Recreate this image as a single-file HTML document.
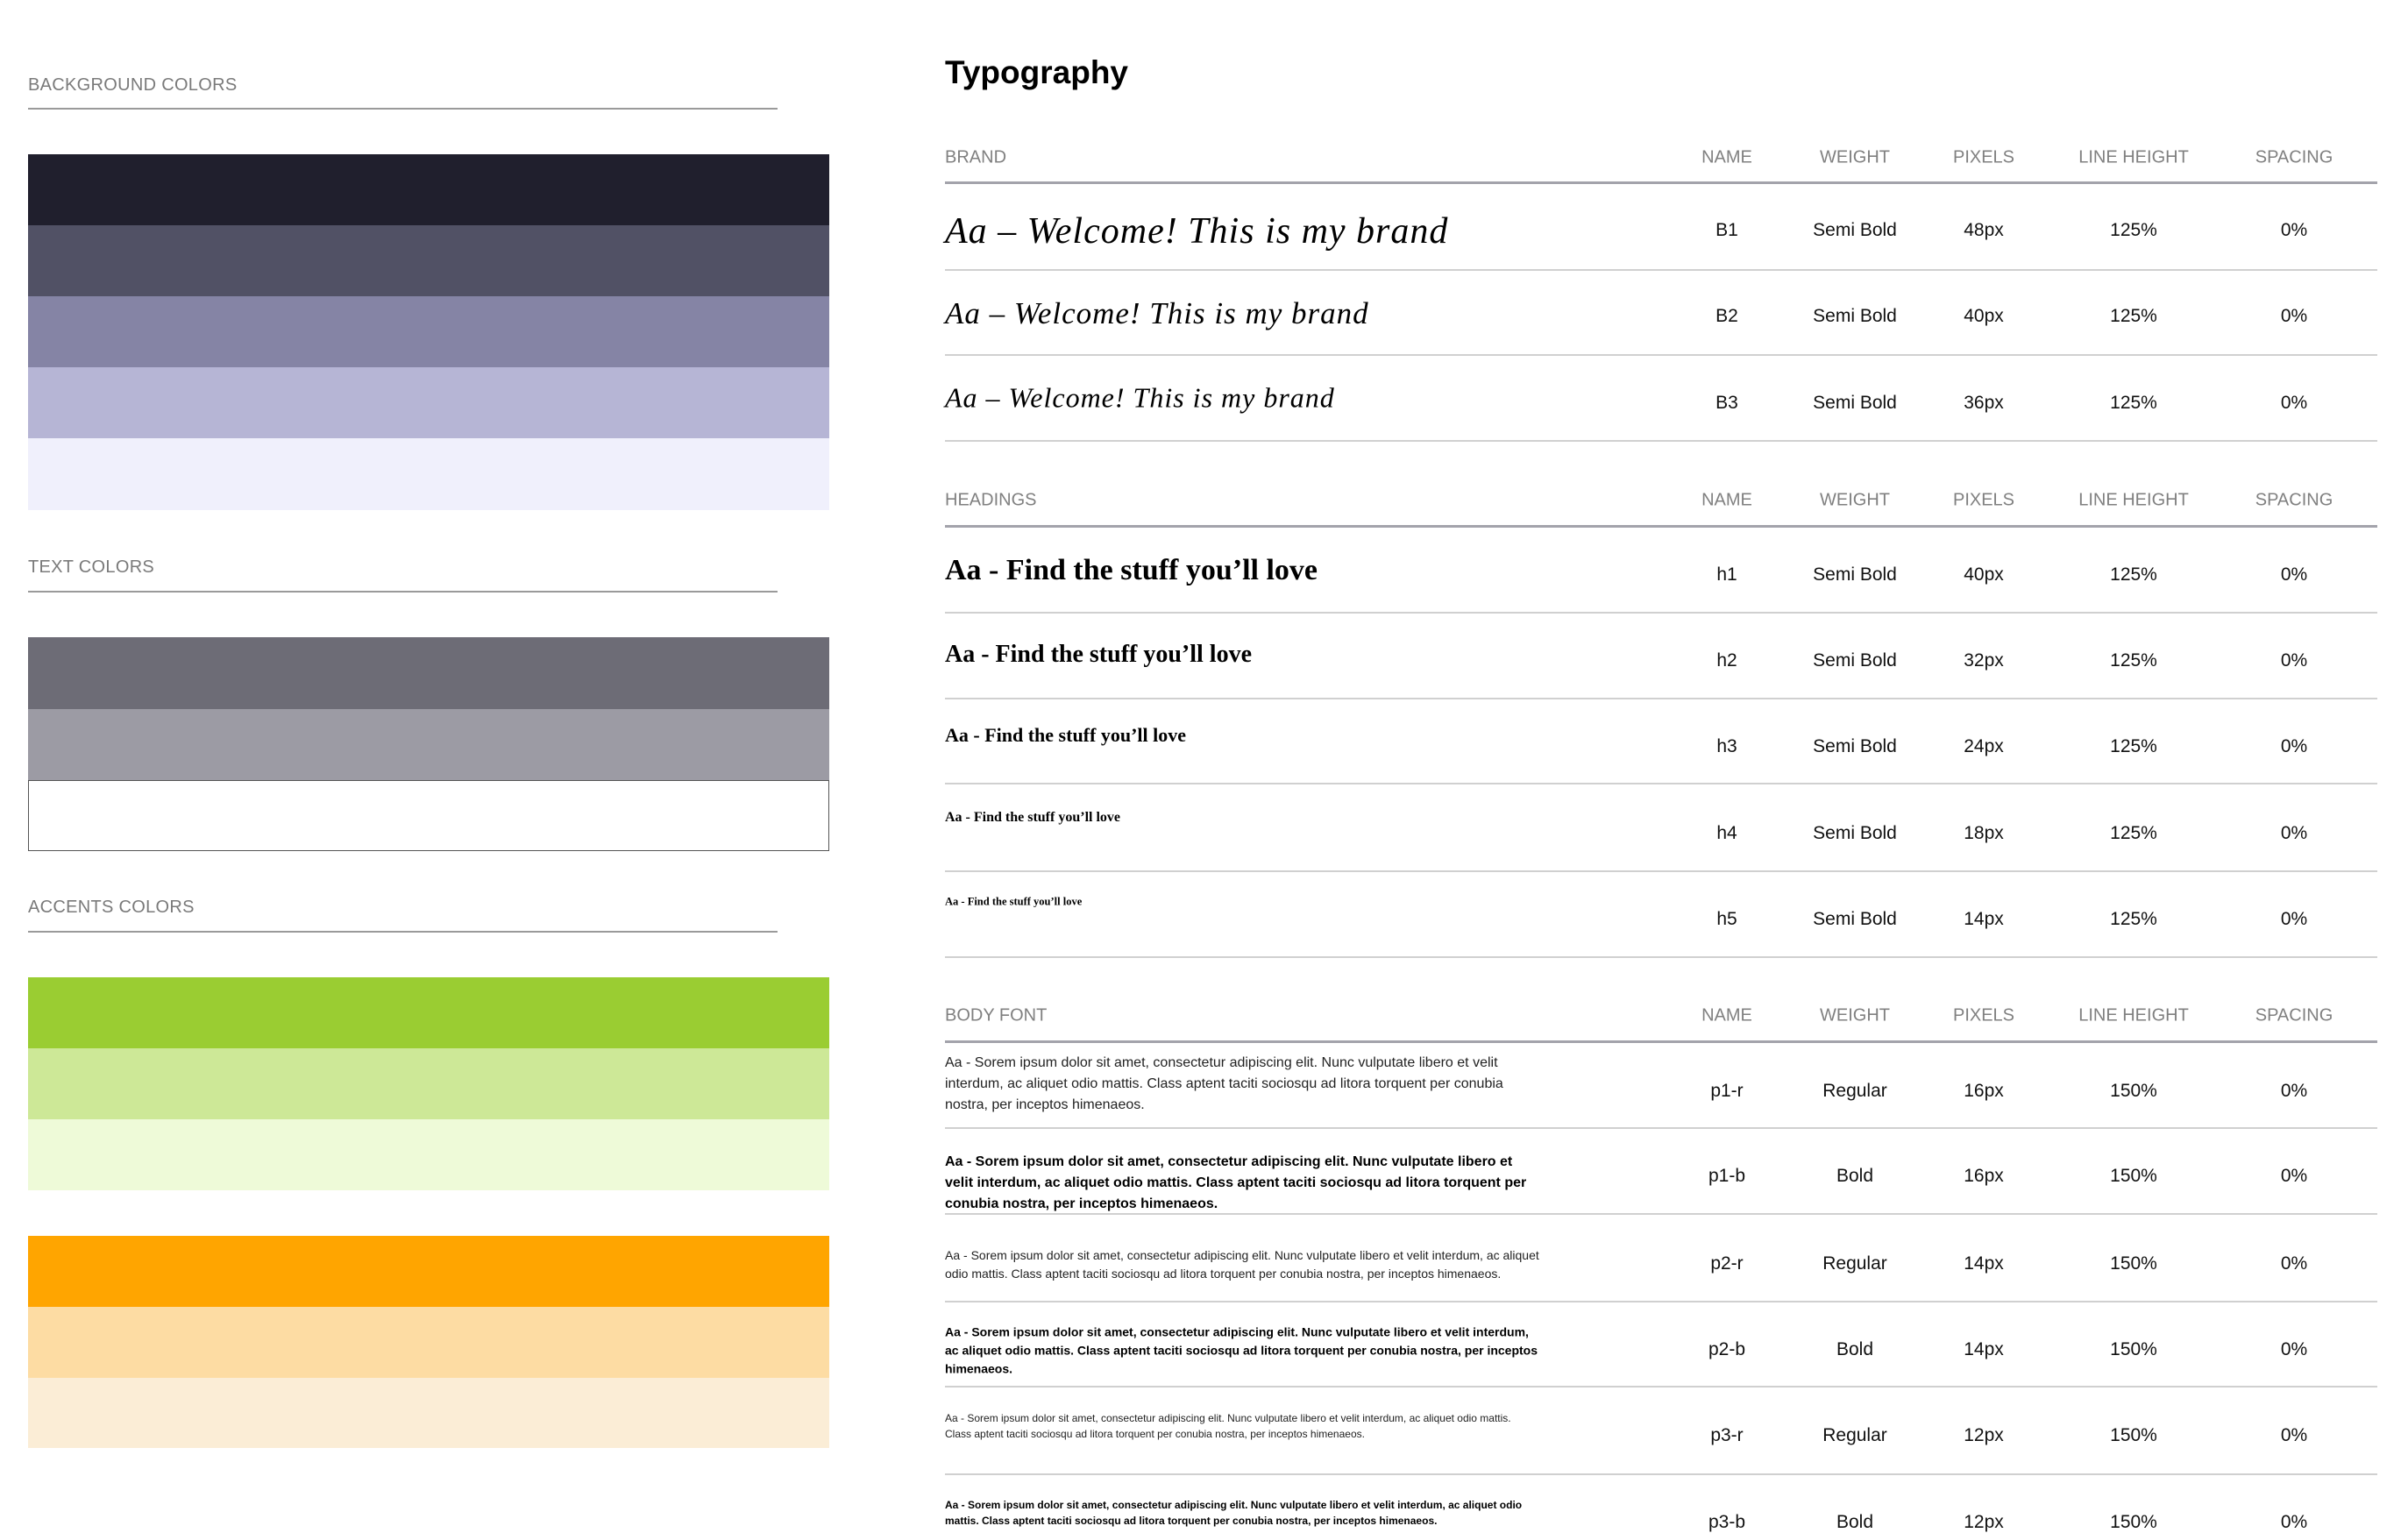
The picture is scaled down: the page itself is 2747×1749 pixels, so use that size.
<!DOCTYPE html>
<html><head><meta charset="utf-8"><style>
*{margin:0;padding:0;box-sizing:border-box}
body{width:2747px;height:1711px;background:#fff;position:relative;overflow:hidden;font-family:"Liberation Sans",sans-serif;color:#000}
.a{position:absolute}
.lbl{position:absolute;left:32px;font-size:20px;color:#7a7a7a;letter-spacing:0.3px}
.ln{position:absolute;left:32px;width:855px;height:2px;background:#9a9a9a}
.sw{position:absolute;left:32px;width:914px}
.hd{position:absolute;font-size:20px;color:#808080;transform:translate(-50%,-50%)}
.hl{position:absolute;font-size:20px;color:#808080;left:1078px;transform:translateY(-50%)}
.v{position:absolute;font-size:21px;color:#111;transform:translate(-50%,-50%)}
.rl{position:absolute;left:1078px;width:1634px;height:2px;background:#d0d0d0}
.hrl{position:absolute;left:1078px;width:1634px;height:3px;background:#a3a3ab}
.br{position:absolute;left:1078px;font-family:"Liberation Serif",serif;font-style:italic;transform:translateY(-50%);white-space:nowrap}
.hh{position:absolute;left:1078px;font-family:"Liberation Serif",serif;font-weight:bold;white-space:nowrap;transform:translateY(-50%)}
.bd{position:absolute;left:1078px;width:680px;transform:translateY(-50%);color:#222}
</style></head><body>
<div class="lbl" style="top:86px">BACKGROUND COLORS</div>
<div class="ln" style="top:123px"></div>
<div class="sw" style="top:176px;height:81px;background:#201f2d"></div>
<div class="sw" style="top:257px;height:81px;background:#515165"></div>
<div class="sw" style="top:338px;height:81px;background:#8584a5"></div>
<div class="sw" style="top:419px;height:81px;background:#b6b5d5"></div>
<div class="sw" style="top:500px;height:82px;background:#f0f0fc"></div>

<div class="lbl" style="top:636px">TEXT COLORS</div>
<div class="ln" style="top:674px"></div>
<div class="sw" style="top:727px;height:82px;background:#6d6c76"></div>
<div class="sw" style="top:809px;height:81px;background:#9c9ba4"></div>
<div class="sw" style="top:890px;height:81px;background:#fff;border:1.5px solid #555"></div>

<div class="lbl" style="top:1024px">ACCENTS COLORS</div>
<div class="ln" style="top:1062px"></div>
<div class="sw" style="top:1115px;height:81px;background:#9acd32"></div>
<div class="sw" style="top:1196px;height:81px;background:#cde897"></div>
<div class="sw" style="top:1277px;height:81px;background:#eefad8"></div>
<div class="sw" style="top:1410px;height:81px;background:#ffa500"></div>
<div class="sw" style="top:1491px;height:81px;background:#fddca3"></div>
<div class="sw" style="top:1572px;height:80px;background:#fbedd6"></div>

<div class="a" style="left:1078px;top:62px;font-size:37px;font-weight:bold">Typography</div>

<!-- BRAND -->
<div class="hl" style="top:180px">BRAND</div>
<div class="hd" style="left:1970px;top:180px">NAME</div><div class="hd" style="left:2116px;top:180px">WEIGHT</div><div class="hd" style="left:2263px;top:180px">PIXELS</div><div class="hd" style="left:2434px;top:180px">LINE HEIGHT</div><div class="hd" style="left:2617px;top:180px">SPACING</div>
<div class="hrl" style="top:207px"></div>
<div class="br" style="top:264px;font-size:42px;letter-spacing:1px">Aa – Welcome! This is my brand</div>
<div class="v" style="left:1970px;top:263px">B1</div><div class="v" style="left:2116px;top:263px">Semi Bold</div><div class="v" style="left:2263px;top:263px">48px</div><div class="v" style="left:2434px;top:263px">125%</div><div class="v" style="left:2617px;top:263px">0%</div>
<div class="rl" style="top:307px"></div>
<div class="br" style="top:358px;font-size:35px;letter-spacing:1px">Aa – Welcome! This is my brand</div>
<div class="v" style="left:1970px;top:361px">B2</div><div class="v" style="left:2116px;top:361px">Semi Bold</div><div class="v" style="left:2263px;top:361px">40px</div><div class="v" style="left:2434px;top:361px">125%</div><div class="v" style="left:2617px;top:361px">0%</div>
<div class="rl" style="top:404px"></div>
<div class="br" style="top:454px;font-size:32px;letter-spacing:1px">Aa – Welcome! This is my brand</div>
<div class="v" style="left:1970px;top:460px">B3</div><div class="v" style="left:2116px;top:460px">Semi Bold</div><div class="v" style="left:2263px;top:460px">36px</div><div class="v" style="left:2434px;top:460px">125%</div><div class="v" style="left:2617px;top:460px">0%</div>
<div class="rl" style="top:502px"></div>

<!-- HEADINGS -->
<div class="hl" style="top:571px">HEADINGS</div>
<div class="hd" style="left:1970px;top:571px">NAME</div><div class="hd" style="left:2116px;top:571px">WEIGHT</div><div class="hd" style="left:2263px;top:571px">PIXELS</div><div class="hd" style="left:2434px;top:571px">LINE HEIGHT</div><div class="hd" style="left:2617px;top:571px">SPACING</div>
<div class="hrl" style="top:599px"></div>
<div class="hh" style="top:651px;font-size:34px">Aa - Find the stuff you’ll love</div>
<div class="v" style="left:1970px;top:656px">h1</div><div class="v" style="left:2116px;top:656px">Semi Bold</div><div class="v" style="left:2263px;top:656px">40px</div><div class="v" style="left:2434px;top:656px">125%</div><div class="v" style="left:2617px;top:656px">0%</div>
<div class="rl" style="top:698px"></div>
<div class="hh" style="top:747px;font-size:28px">Aa - Find the stuff you’ll love</div>
<div class="v" style="left:1970px;top:754px">h2</div><div class="v" style="left:2116px;top:754px">Semi Bold</div><div class="v" style="left:2263px;top:754px">32px</div><div class="v" style="left:2434px;top:754px">125%</div><div class="v" style="left:2617px;top:754px">0%</div>
<div class="rl" style="top:796px"></div>
<div class="hh" style="top:839px;font-size:22px">Aa - Find the stuff you’ll love</div>
<div class="v" style="left:1970px;top:852px">h3</div><div class="v" style="left:2116px;top:852px">Semi Bold</div><div class="v" style="left:2263px;top:852px">24px</div><div class="v" style="left:2434px;top:852px">125%</div><div class="v" style="left:2617px;top:852px">0%</div>
<div class="rl" style="top:893px"></div>
<div class="hh" style="top:933px;font-size:16px">Aa - Find the stuff you’ll love</div>
<div class="v" style="left:1970px;top:951px">h4</div><div class="v" style="left:2116px;top:951px">Semi Bold</div><div class="v" style="left:2263px;top:951px">18px</div><div class="v" style="left:2434px;top:951px">125%</div><div class="v" style="left:2617px;top:951px">0%</div>
<div class="rl" style="top:993px"></div>
<div class="hh" style="top:1029px;font-size:12.5px">Aa - Find the stuff you’ll love</div>
<div class="v" style="left:1970px;top:1049px">h5</div><div class="v" style="left:2116px;top:1049px">Semi Bold</div><div class="v" style="left:2263px;top:1049px">14px</div><div class="v" style="left:2434px;top:1049px">125%</div><div class="v" style="left:2617px;top:1049px">0%</div>
<div class="rl" style="top:1091px"></div>

<!-- BODY -->
<div class="hl" style="top:1159px">BODY FONT</div>
<div class="hd" style="left:1970px;top:1159px">NAME</div><div class="hd" style="left:2116px;top:1159px">WEIGHT</div><div class="hd" style="left:2263px;top:1159px">PIXELS</div><div class="hd" style="left:2434px;top:1159px">LINE HEIGHT</div><div class="hd" style="left:2617px;top:1159px">SPACING</div>
<div class="hrl" style="top:1187px"></div>
<div class="bd" style="top:1237px;font-size:16px;line-height:24px">Aa - Sorem ipsum dolor sit amet, consectetur adipiscing elit. Nunc vulputate libero et velit interdum, ac aliquet odio mattis. Class aptent taciti sociosqu ad litora torquent per conubia nostra, per inceptos himenaeos.</div>
<div class="v" style="left:1970px;top:1245px">p1-r</div><div class="v" style="left:2116px;top:1245px">Regular</div><div class="v" style="left:2263px;top:1245px">16px</div><div class="v" style="left:2434px;top:1245px">150%</div><div class="v" style="left:2617px;top:1245px">0%</div>
<div class="rl" style="top:1286px"></div>
<div class="bd" style="top:1350px;font-size:16px;line-height:24px;font-weight:bold;color:#000">Aa - Sorem ipsum dolor sit amet, consectetur adipiscing elit. Nunc vulputate libero et velit interdum, ac aliquet odio mattis. Class aptent taciti sociosqu ad litora torquent per conubia nostra, per inceptos himenaeos.</div>
<div class="v" style="left:1970px;top:1342px">p1-b</div><div class="v" style="left:2116px;top:1342px">Bold</div><div class="v" style="left:2263px;top:1342px">16px</div><div class="v" style="left:2434px;top:1342px">150%</div><div class="v" style="left:2617px;top:1342px">0%</div>
<div class="rl" style="top:1384px"></div>
<div class="bd" style="top:1443px;font-size:14px;line-height:21px;width:680px">Aa - Sorem ipsum dolor sit amet, consectetur adipiscing elit. Nunc vulputate libero et velit interdum, ac aliquet odio mattis. Class aptent taciti sociosqu ad litora torquent per conubia nostra, per inceptos himenaeos.</div>
<div class="v" style="left:1970px;top:1442px">p2-r</div><div class="v" style="left:2116px;top:1442px">Regular</div><div class="v" style="left:2263px;top:1442px">14px</div><div class="v" style="left:2434px;top:1442px">150%</div><div class="v" style="left:2617px;top:1442px">0%</div>
<div class="rl" style="top:1484px"></div>
<div class="bd" style="top:1541px;font-size:14px;line-height:21px;font-weight:bold;color:#000;width:680px">Aa - Sorem ipsum dolor sit amet, consectetur adipiscing elit. Nunc vulputate libero et velit interdum, ac aliquet odio mattis. Class aptent taciti sociosqu ad litora torquent per conubia nostra, per inceptos himenaeos.</div>
<div class="v" style="left:1970px;top:1540px">p2-b</div><div class="v" style="left:2116px;top:1540px">Bold</div><div class="v" style="left:2263px;top:1540px">14px</div><div class="v" style="left:2434px;top:1540px">150%</div><div class="v" style="left:2617px;top:1540px">0%</div>
<div class="rl" style="top:1581px"></div>
<div class="bd" style="top:1627px;font-size:12px;line-height:18px;width:665px">Aa - Sorem ipsum dolor sit amet, consectetur adipiscing elit. Nunc vulputate libero et velit interdum, ac aliquet odio mattis. Class aptent taciti sociosqu ad litora torquent per conubia nostra, per inceptos himenaeos.</div>
<div class="v" style="left:1970px;top:1638px">p3-r</div><div class="v" style="left:2116px;top:1638px">Regular</div><div class="v" style="left:2263px;top:1638px">12px</div><div class="v" style="left:2434px;top:1638px">150%</div><div class="v" style="left:2617px;top:1638px">0%</div>
<div class="rl" style="top:1681px"></div>
<div class="bd" style="top:1726px;font-size:12px;line-height:18px;width:665px;font-weight:bold;color:#000">Aa - Sorem ipsum dolor sit amet, consectetur adipiscing elit. Nunc vulputate libero et velit interdum, ac aliquet odio mattis. Class aptent taciti sociosqu ad litora torquent per conubia nostra, per inceptos himenaeos.</div>
<div class="v" style="left:1970px;top:1737px">p3-b</div><div class="v" style="left:2116px;top:1737px">Bold</div><div class="v" style="left:2263px;top:1737px">12px</div><div class="v" style="left:2434px;top:1737px">150%</div><div class="v" style="left:2617px;top:1737px">0%</div>
</body></html>
